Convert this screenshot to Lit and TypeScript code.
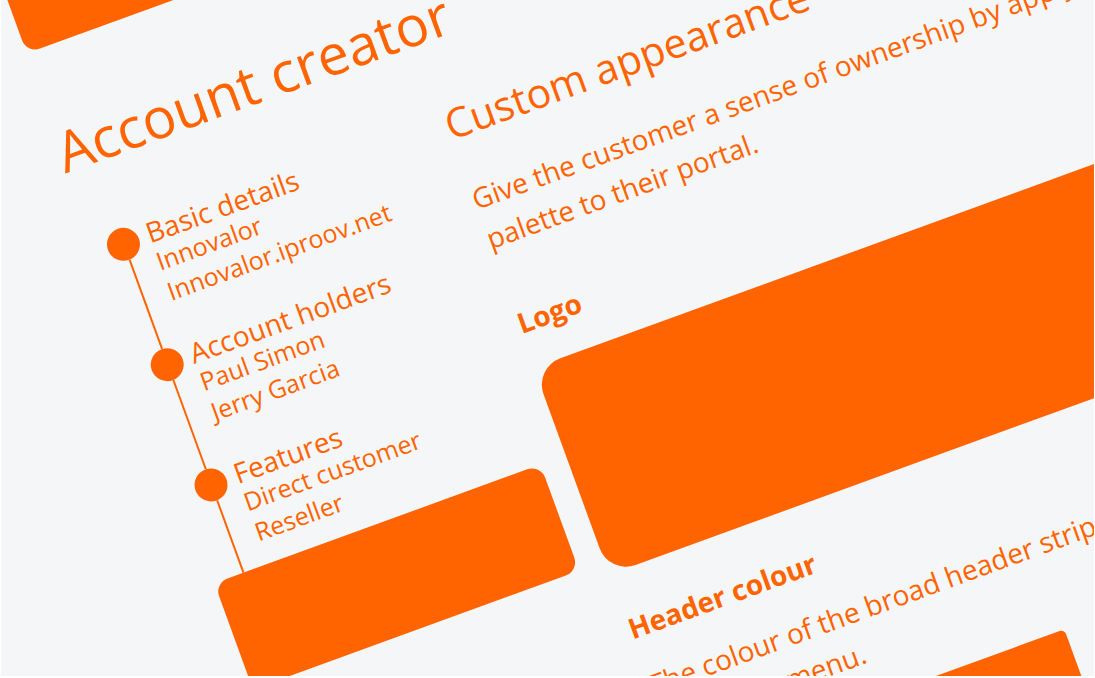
import { LitElement, html, css } from "lit";
import { customElement } from "lit/decorators.js";

interface Step {
  title: string;
  lines: string[];
}

const STEPS: Step[] = [
  { title: "Basic details", lines: ["Innovalor", "Innovalor.iproov.net"] },
  { title: "Account holders", lines: ["Paul Simon", "Jerry Garcia"] },
  { title: "Features", lines: ["Direct customer", "Reseller"] },
];

@customElement("app-root")
export class AppRoot extends LitElement {
  static styles = css`
    :host {
      --ink: #ff6400;
      display: block;
      box-sizing: border-box;
      height: 100vh;
      padding: 0 1px 2px;
      background: #fff;
      color: var(--ink);
      font-family: "Open Sans", "Noto Sans", sans-serif;
      font-size: 28px;
      line-height: 42px;
    }
    h1,
    h2,
    h3,
    p,
    ol {
      margin: 0;
      padding: 0;
      font-weight: 400;
    }
    .viewport {
      height: 100%;
      overflow: hidden;
      background: #f4f6f8;
    }
    /* The whole sheet is tilted around its top left corner. */
    .sheet {
      display: grid;
      grid-template-columns: 347px 1fr;
      column-gap: 27px;
      align-items: start;
      box-sizing: border-box;
      width: 120vw;
      padding-left: 1px;
      transform: rotate(-20deg);
      transform-origin: 0 0;
      white-space: nowrap;
    }
    .block {
      background: var(--ink);
    }
    .banner {
      height: 59px;
      margin-left: 5px;
      border-radius: 0 0 14px 14px;
    }
    h1 {
      margin-top: 72px;
      font-size: 56px;
      line-height: 64px;
    }
    .steps {
      margin-top: 60px;
      padding-left: 14px;
      list-style: none;
    }
    .step {
      display: flex;
      gap: 9px;
    }
    .rail {
      display: flex;
      flex-direction: column;
      align-items: center;
    }
    .dot {
      width: 33px;
      height: 33px;
      border-radius: 50%;
      background: var(--ink);
    }
    .stem {
      flex: 1;
      width: 2px;
      background: var(--ink);
    }
    .info {
      padding-bottom: 36px;
      font-size: 25px;
      line-height: 32px;
    }
    .step:last-child .info {
      padding-bottom: 18px;
    }
    .info h3 {
      font-size: 28px;
      line-height: 28px;
    }
    .action {
      height: 113px;
      border-radius: 14px;
    }
    .main {
      padding-top: 246px;
    }
    h2 {
      margin-bottom: 34px;
      font-size: 41px;
      line-height: 48px;
    }
    .main h3 {
      margin-bottom: 18px;
      font-size: 28px;
      font-weight: 700;
    }
    .intro {
      margin-bottom: 48px;
    }
    .main .logo-title {
      margin-bottom: 26px;
    }
    .logo {
      height: 220px;
      margin-bottom: 37px;
      border-radius: 28px;
    }
    .swatch {
      width: 409px;
      height: 80px;
      margin-top: 26px;
      border-radius: 5px;
    }
  `;

  private renderStep(step: Step) {
    return html`
      <li class="step">
        <div class="rail">
          <span class="dot"></span>
          <span class="stem"></span>
        </div>
        <div class="info">
          <h3>${step.title}</h3>
          ${step.lines.map((line) => html`<p>${line}</p>`)}
        </div>
      </li>
    `;
  }

  render() {
    return html`
      <div class="viewport">
        <div class="sheet">
          <aside>
            <div class="block banner"></div>
            <h1>Account creator</h1>
            <ol class="steps">
              ${STEPS.map((step) => this.renderStep(step))}
            </ol>
            <div class="block action"></div>
          </aside>
          <main class="main">
            <h2>Custom appearance</h2>
            <p class="intro">
              Give the customer a sense of ownership by applying a colour<br />palette
              to their portal.
            </p>
            <h3 class="logo-title">Logo</h3>
            <div class="block logo"></div>
            <h3>Header colour</h3>
            <p>
              The colour of the broad header strip<br />and main menu.
            </p>
            <div class="block swatch"></div>
          </main>
        </div>
      </div>
    `;
  }
}
